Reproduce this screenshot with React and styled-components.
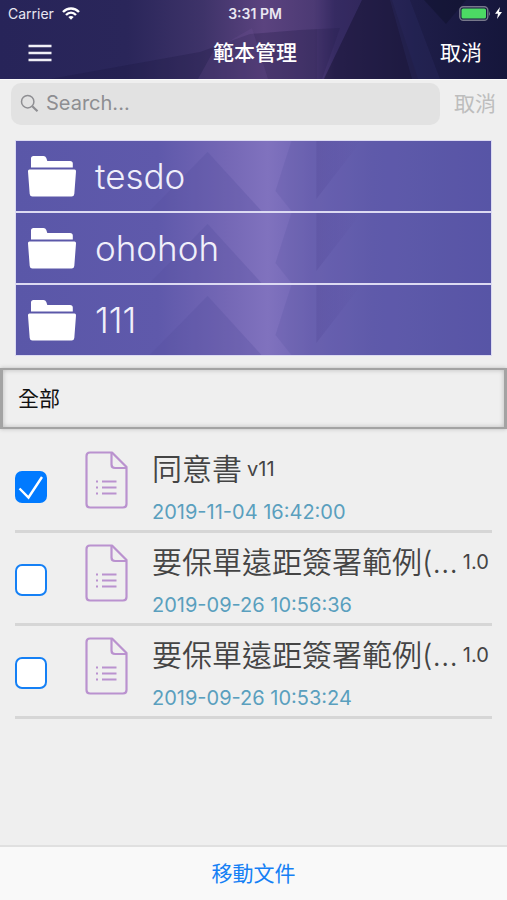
import React from 'react'
import { useState } from 'react'
import styled, { createGlobalStyle } from 'styled-components'

const GlobalStyle = createGlobalStyle`
  * {
    box-sizing: border-box;
  }
  body {
    margin: 0;
    background: #efefef;
    font-family: Inter, "Noto Sans CJK TC", sans-serif;
  }
  button {
    border: 0;
    padding: 0;
    background: none;
    font: inherit;
    color: inherit;
    cursor: pointer;
  }
`

const Page = styled.div`
  min-height: 100vh;
  display: flex;
  flex-direction: column;
`

const Header = styled.header`
  position: relative;
  color: #fff;
  background: #25225a;
`

const Backdrop = styled.svg`
  position: absolute;
  inset: 0;
  width: 100%;
  height: 100%;
`

const StatusBar = styled.div`
  position: relative;
  display: grid;
  grid-template-columns: 1fr auto 1fr;
  align-items: center;
  height: 26px;
  padding: 0 5px 0 8px;
  font-size: 14px;
  color: #e9e7f2;
`

const Carrier = styled.div`
  display: flex;
  align-items: center;
  gap: 8px;
`

const Clock = styled.span`
  font-size: 14px;
  font-weight: 600;
`

const Battery = styled.div`
  display: flex;
  align-items: center;
  justify-content: flex-end;
  gap: 4px;
`

const NavBar = styled.div`
  position: relative;
  display: grid;
  grid-template-columns: 1fr auto 1fr;
  align-items: center;
  height: 53px;
  padding: 0 25px 0 28px;
  font-size: 21px;
`

const MenuButton = styled.button`
  display: flex;
  justify-self: start;
`

const Title = styled.h1`
  margin: 0;
  font-size: 21px;
  line-height: 30px;
  font-weight: 500;
`

const NavButton = styled.button`
  justify-self: end;
  line-height: 30px;
`

const SearchRow = styled.div`
  display: flex;
  align-items: center;
  gap: 14px;
  padding: 3px 11px;
  border-top: 1px solid #fafafa;
  font-size: 20px;
`

const SearchBox = styled.label`
  flex: 1;
  display: flex;
  align-items: center;
  gap: 7px;
  height: 42px;
  padding: 0 9px 2px;
  border-radius: 10px;
  background: #e2e2e2;
  color: #8e8e92;
`

const SearchInput = styled.input`
  flex: 1;
  min-width: 0;
  padding: 0;
  border: 0;
  outline: 0;
  background: none;
  font: inherit;
  color: #333;
  &::placeholder {
    color: #8e8e92;
  }
`

const CancelSearch = styled.button`
  padding-bottom: 4px;
  font-size: 21px;
  color: #bdbdbd;
`

const FolderList = styled.div`
  display: flex;
  flex-direction: column;
  gap: 2px;
  margin: 12px 15px;
  border: 1px solid #dcdaf2;
  background: #dcdaf2;
`

const FolderButton = styled.button`
  position: relative;
  display: flex;
  align-items: center;
  height: 70px;
  color: #f0effa;
  background: #5b58aa;
`

const FolderLabel = styled.span`
  position: relative;
  display: flex;
  align-items: center;
  gap: 18px;
  padding-left: 11px;
  font-size: 35px;
  font-weight: 300;
`

const SectionTitle = styled.h2`
  display: flex;
  align-items: center;
  height: 61px;
  margin: 0;
  padding: 0 15px 3px;
  border: 2px solid #a3a3a3;
  border-width: 2px 3px;
  box-shadow: 0 0 4px #bbb, inset 0 0 5px #bbb;
  font-size: 21px;
  font-weight: 400;
  color: #111;
`

const DocumentList = styled.ul`
  flex: 1;
  list-style: none;
  margin: 0;
  padding: 11px 15px;
`

const DocumentRow = styled.li`
  display: flex;
  align-items: center;
  height: 93px;
  border-bottom: 3px solid #d6d6d6;
`

const CheckLabel = styled.label`
  display: grid;
  padding-top: 4px;
  margin-right: 38px;
  svg {
    grid-area: 1 / 1;
    pointer-events: none;
  }
`

const Checkbox = styled.input`
  grid-area: 1 / 1;
  appearance: none;
  width: 32px;
  height: 32px;
  margin: 0;
  border: 2px solid #1580f5;
  border-radius: 7px;
  background: #fff;
  &:checked {
    background: #007aff;
    border-color: #007aff;
  }
`

const FileIcon = styled.svg`
  flex: none;
  margin-bottom: 11px;
`

const DocumentText = styled.div`
  flex: 1;
  min-width: 0;
  padding-top: 10px;
  margin-left: 24px;
`

const NameLine = styled.div`
  display: flex;
  align-items: center;
  gap: 5px;
  height: 42px;
  color: #444;
`

const Name = styled.span`
  font-size: 30px;
  line-height: 42px;
  font-weight: 350;
  white-space: nowrap;
`

const Version = styled.span`
  font-size: 20px;
`

const SavedAt = styled.time`
  display: block;
  margin-top: 2px;
  font-size: 20px;
  line-height: 40px;
  color: #5a9fbe;
`

const Footer = styled.footer`
  display: flex;
  justify-content: center;
  align-items: center;
  height: 55px;
  padding-bottom: 3px;
  border-top: 2px solid #e0e0e0;
  background: #f9f9f9;
  font-size: 21px;
  color: #1580f5;
`

const HeaderBackdrop = () => (
  <Backdrop viewBox="0 0 507 79" preserveAspectRatio="none" aria-hidden="true">
    <defs>
      <linearGradient id="night">
        <stop offset="0" stopColor="#272459" />
        <stop offset="0.25" stopColor="#2a265a" />
        <stop offset="0.4" stopColor="#3e3369" />
        <stop offset="0.52" stopColor="#5b437f" />
        <stop offset="0.62" stopColor="#4c3a74" />
        <stop offset="0.66" stopColor="#30275c" />
        <stop offset="0.82" stopColor="#1e1d48" />
        <stop offset="1" stopColor="#15163b" />
      </linearGradient>
    </defs>
    <rect width="507" height="79" fill="url(#night)" />
    <path d="M50 79 L200 52 L250 34 L300 30 L340 28 L322 79 Z" fill="#16123a" opacity="0.25" />
    <path d="M198 79 L214 50 L252 28 L268 79 Z" fill="#7a5b9e" opacity="0.18" />
    <path d="M317 0 L362 0 L324 79 L317 79 Z" fill="#4f3c7c" opacity="0.2" />
    <path d="M362 0 H392 L418 79 H324 Z" fill="#1c1538" opacity="0.5" />
    <path d="M390 0 H410 L440 79 H412 Z" fill="#302f68" opacity="0.3" />
    <path d="M424 0 H466 L446 24 Z" fill="#0d0f25" opacity="0.4" />
  </Backdrop>
)

const FolderBackdrop = () => (
  <Backdrop viewBox="0 0 476 70" preserveAspectRatio="none" aria-hidden="true">
    <defs>
      <linearGradient id="violet">
        <stop offset="0" stopColor="#5a57a8" />
        <stop offset="0.3" stopColor="#5f59ab" />
        <stop offset="0.44" stopColor="#7467b5" />
        <stop offset="0.53" stopColor="#8072be" />
        <stop offset="0.62" stopColor="#6f65b4" />
        <stop offset="0.75" stopColor="#625dae" />
        <stop offset="1" stopColor="#5856a8" />
      </linearGradient>
      <linearGradient id="fold">
        <stop offset="0" stopColor="#544a9a" stopOpacity="0.35" />
        <stop offset="1" stopColor="#544a9a" stopOpacity="0" />
      </linearGradient>
    </defs>
    <rect width="476" height="70" fill="url(#violet)" />
    <path d="M134 70 L192 11 L246 70 Z" fill="#57509f" opacity="0.3" />
    <path d="M276 0 L260 50 L276 70 L476 70 L476 0 Z" fill="#57509f" opacity="0.22" />
    <path d="M301 0 H346 L301 58 Z" fill="url(#fold)" />
  </Backdrop>
)

const WifiIcon = () => (
  <svg width="18" height="13" viewBox="0 0 18 13" fill="none" stroke="#fff" strokeWidth="2.4" aria-hidden="true">
    <path d="M1 5 C5.5 0.3 12.5 0.3 17 5" />
    <path d="M4 8 C7 5 11 5 14 8" />
    <path d="M9 12.8 L6.3 10 C8 8.6 10 8.6 11.7 10 Z" fill="#fff" stroke="none" />
  </svg>
)

const BatteryIcon = () => (
  <svg width="32" height="15" viewBox="0 0 32 15" aria-hidden="true">
    <rect x="0.8" y="0.8" width="28" height="13.4" rx="3.5" fill="none" stroke="#77788b" strokeWidth="1.4" />
    <rect x="2.5" y="2.5" width="24.5" height="10" rx="1.6" fill="#4cd964" />
    <path d="M30 5 Q31.8 7.5 30 10 Z" fill="#77788b" />
  </svg>
)

const BoltIcon = () => (
  <svg width="7" height="12" viewBox="0 0 7 12" fill="#fff" aria-hidden="true">
    <path d="M5 0 L0 6.8 H3 L2 12 L7 5 H4 Z" />
  </svg>
)

const MenuIcon = () => (
  <svg width="24" height="18" viewBox="0 0 24 18" stroke="#f0eff6" strokeWidth="2.6" aria-hidden="true">
    <path d="M0.5 2 H23.5 M0.5 9 H23.5 M0.5 16 H23.5" />
  </svg>
)

const SearchIcon = () => (
  <svg width="19" height="19" viewBox="0 0 19 19" fill="none" stroke="#8e8e92" aria-hidden="true">
    <circle cx="7.7" cy="7.7" r="6.2" strokeWidth="1.5" />
    <path d="M12.3 12.3 L17.5 17.2" strokeWidth="2.2" />
  </svg>
)

const FolderIcon = () => (
  <svg width="50" height="42" viewBox="0 0 50 42" fill="#fff" aria-hidden="true">
    <path d="M4 12.5 V3.5 Q4 1 6.5 1 H16.5 Q18.5 1 19.3 3 L20.3 6 H43 Q45.8 6 45.8 8.5 V12.5 Z" />
    <path d="M2.5 14.5 H47.5 Q49.2 14.5 49 16.5 L47.3 39 Q47 41.5 44.6 41.5 H5.4 Q3 41.5 2.7 39 L1 16.5 Q0.8 14.5 2.5 14.5 Z" />
  </svg>
)

const CheckIcon = () => (
  <svg width="32" height="32" viewBox="0 0 32 32" fill="none" stroke="#fff" strokeWidth="2.4" aria-hidden="true">
    <path d="M4.5 17.5 L13.5 26.5 L27 6" />
  </svg>
)

const DocumentIcon = () => (
  <FileIcon width="43" height="58" viewBox="0 0 43 58" fill="none" stroke="#ba92cf" strokeWidth="2.2" strokeLinejoin="round" aria-hidden="true">
    <path d="M27 1.5 H5 Q1.5 1.5 1.5 5 V53 Q1.5 56.5 5 56.5 H38 Q41.5 56.5 41.5 53 V16 Z" />
    <path d="M26.5 1.5 V13.5 Q26.5 17 30 17 H41.5" />
    <path d="M17 30.5 H31.5 M17 36.5 H31.5 M17 42.5 H31.5" />
    <path d="M11 30.5 H13 M11 36.5 H13 M11 42.5 H13" />
  </FileIcon>
)

const folders = ['tesdo', 'ohohoh', '111']

const initialDocuments = [
  { id: 1, name: '同意書', version: 'v11', savedAt: '2019-11-04 16:42:00', selected: true },
  { id: 2, name: '要保單遠距簽署範例(…', version: '1.0', savedAt: '2019-09-26 10:56:36', selected: false },
  { id: 3, name: '要保單遠距簽署範例(…', version: '1.0', savedAt: '2019-09-26 10:53:24', selected: false },
]

const DocumentItem = ({ document, onToggle }) => {
  const inputId = `document-${document.id}`

  return (
    <DocumentRow>
      <CheckLabel htmlFor={inputId}>
        <Checkbox
          id={inputId}
          type="checkbox"
          aria-label={document.name}
          checked={document.selected}
          onChange={() => onToggle(document.id)}
        />
        {document.selected && <CheckIcon />}
      </CheckLabel>
      <DocumentIcon />
      <DocumentText>
        <NameLine>
          <Name>{document.name}</Name>
          <Version>{document.version}</Version>
        </NameLine>
        <SavedAt>{document.savedAt}</SavedAt>
      </DocumentText>
    </DocumentRow>
  )
}

const App = () => {
  const [search, setSearch] = useState('')
  const [documents, setDocuments] = useState(initialDocuments)

  const handleToggle = (id) => {
    setDocuments(documents.map((doc) => (doc.id === id ? { ...doc, selected: !doc.selected } : doc)))
  }

  return (
    <Page>
      <GlobalStyle />
      <Header>
        <HeaderBackdrop />
        <StatusBar>
          <Carrier>Carrier <WifiIcon /></Carrier>
          <Clock>3:31 PM</Clock>
          <Battery><BatteryIcon /><BoltIcon /></Battery>
        </StatusBar>
        <NavBar>
          <MenuButton aria-label="Menu"><MenuIcon /></MenuButton>
          <Title>範本管理</Title>
          <NavButton>取消</NavButton>
        </NavBar>
      </Header>

      <SearchRow>
        <SearchBox htmlFor="search">
          <SearchIcon />
          <SearchInput
            id="search"
            aria-label="Search"
            placeholder="Search..."
            value={search}
            onChange={(event) => setSearch(event.target.value)}
          />
        </SearchBox>
        <CancelSearch onClick={() => setSearch('')}>取消</CancelSearch>
      </SearchRow>

      <FolderList>
        {folders.map((folder) => (
          <FolderButton key={folder}>
            <FolderBackdrop />
            <FolderLabel><FolderIcon />{folder}</FolderLabel>
          </FolderButton>
        ))}
      </FolderList>

      <SectionTitle>全部</SectionTitle>

      <DocumentList>
        {documents.map((doc) => (
          <DocumentItem key={doc.id} document={doc} onToggle={handleToggle} />
        ))}
      </DocumentList>

      <Footer>
        <button>移動文件</button>
      </Footer>
    </Page>
  )
}

export default App
